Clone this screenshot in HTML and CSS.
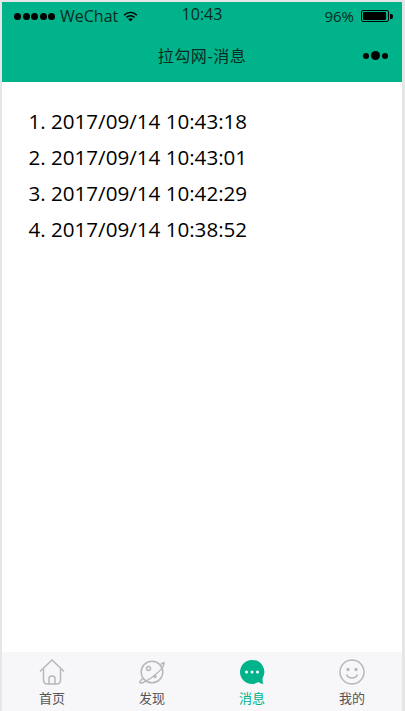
FILE: index.html
```html
<!DOCTYPE html>
<html lang="zh-CN">
<head>
    <meta charset="utf-8">
    <title>拉勾网-消息</title>
    <link rel="stylesheet" href="styles.css">
</head>
<body>
    <div class="phone">
        <header class="top">
            <div class="status">
                <div class="status-left">
                    <span class="signal"><i></i><i></i><i></i><i></i><i></i></span>
                    <span class="carrier">WeChat</span>
                    <svg class="wifi" width="15" height="11" viewBox="0 0 15 11">
                        <path d="M1 4.200C5 .6 10 .6 14 4.200" fill="none" stroke="#000" stroke-width="1.500"/>
                        <path d="M3.400 6.400C5.900 4.300 9.100 4.300 11.600 6.400" fill="none" stroke="#000" stroke-width="1.500"/>
                        <path d="M5.200 8.100C6.600 6.900 8.400 6.900 9.800 8.100L7.500 10.600Z" fill="#000"/>
                    </svg>
                </div>
                <div class="status-time">10:43</div>
                <div class="status-right">
                    <span class="percent">96%</span>
                    <span class="battery"><span class="battery-level"></span></span>
                    <span class="battery-tip"></span>
                </div>
            </div>
            <div class="nav">
                <div class="nav-title">拉勾网-消息</div>
                <div class="nav-menu"><i></i><i class="big"></i><i></i></div>
            </div>
        </header>

        <main class="content">
            <ol class="times">
                <li>2017/09/14 10:43:18</li>
                <li>2017/09/14 10:43:01</li>
                <li>2017/09/14 10:42:29</li>
                <li>2017/09/14 10:38:52</li>
            </ol>
        </main>

        <nav class="tabs">
            <div class="tab">
                <svg width="26" height="26" viewBox="0 0 26 26" fill="none" stroke="#b8b8b8" stroke-width="1.500">
                    <path d="M1 12.500L13 1L25 12.500"/>
                    <path d="M4.500 10V21C4.500 23.500 6 25 8.500 25H17.500C20 25 21.500 23.500 21.500 21V10"/>
                    <path d="M10 25V19.500C10 18 11.300 17 13 17C14.700 17 16 18 16 19.500V25"/>
                </svg>
                <span>首页</span>
            </div>
            <div class="tab">
                <svg width="26" height="26" viewBox="0 0 26 26" fill="none" stroke="#b8b8b8" stroke-width="1.500">
                    <circle cx="13" cy="13" r="10.800"/>
                    <circle cx="9.500" cy="9.500" r="2"/>
                    <circle cx="16" cy="17.500" r="1" fill="#b8b8b8"/>
                    <path d="M22 5.500C24 3.200 25.500 3 25 5C24.500 8 19 14 12 19C6 23 1 25.500 .8 23.500C.6 22.500 2 21 3.500 19.500"/>
                </svg>
                <span>发现</span>
            </div>
            <div class="tab tab-active">
                <svg width="26" height="26" viewBox="0 0 26 26">
                    <path d="M13 1A12 12 0 1 0 19.500 23.100C21 24.300 23 25 24.500 25C23.700 23.800 23.500 22 23.500 19.300A12 12 0 0 0 13 1Z" fill="#00b38a"/>
                    <circle cx="7.500" cy="13" r="1.500" fill="#fff"/>
                    <circle cx="13" cy="13" r="1.500" fill="#fff"/>
                    <circle cx="18.500" cy="13" r="1.500" fill="#fff"/>
                </svg>
                <span>消息</span>
            </div>
            <div class="tab">
                <svg width="26" height="26" viewBox="0 0 26 26" fill="none" stroke="#b8b8b8" stroke-width="1.500">
                    <circle cx="13" cy="13" r="12"/>
                    <circle cx="9" cy="10.500" r=".9" fill="#b8b8b8"/>
                    <circle cx="17" cy="10.500" r=".9" fill="#b8b8b8"/>
                    <path d="M7.500 15.500C9 20 17 20 18.500 15.500"/>
                </svg>
                <span>我的</span>
            </div>
        </nav>
    </div>
</body>
</html>
```

FILE: styles.css
```css
html, body {
    height: 100%;
}

body {
    margin: 0;
    padding: 2px 3px 0 2px;
    box-sizing: border-box;

    background-color: #e6e6e6;
    font-family: "Open Sans", "Noto Sans CJK SC", sans-serif;
    color: #000;
}

.phone {
    display: flex;
    flex-direction: column;
    height: 100%;

    background-color: #fff;
}

.top {
    height: 80px;

    background-color: #00b38a;
}

.status {
    display: flex;
    align-items: center;
    justify-content: space-between;
    height: 28px;
    padding: 0 9px 0 12px;
    position: relative;

    font-size: 15px;
    line-height: 26px;
    color: #0a2a22;
}

.status-left, .status-right {
    display: flex;
    align-items: center;
}

.signal {
    display: flex;
    gap: 1.500px;
    margin-right: 5px;
}

.signal i {
    width: 7px;
    height: 7px;

    background-color: #000;
    border-radius: 50%;
}

.carrier {
    font-size: 16px;
}

.wifi {
    margin-left: 5px;
}

.status-time {
    position: absolute;
    left: 0;
    right: 0;
    top: -1px;

    font-size: 16px;
    text-align: center;
}

.percent {
    margin-right: 7px;
}

.battery {
    width: 28px;
    height: 12px;
    padding: 1px;
    box-sizing: border-box;

    border: 1px solid #000;
    border-radius: 2px;
}

.battery-level {
    display: block;
    width: 23px;
    height: 8px;

    background-color: #000;
    border-radius: 1px;
}

.battery-tip {
    width: 3px;
    height: 5px;
    margin-left: 1px;

    background-color: #000;
    border-radius: 0 2px 2px 0;
}

.nav {
    display: flex;
    align-items: center;
    justify-content: center;
    height: 52px;
    position: relative;
}

.nav-title {
    margin-bottom: 2px;

    font-size: 16px;
    letter-spacing: .6px;
    color: #0a2a22;
}

.nav-menu {
    display: flex;
    align-items: center;
    gap: 2px;
    position: absolute;
    right: 14px;
    top: 21px;
}

.nav-menu i {
    width: 6px;
    height: 6px;

    background-color: #000;
    border-radius: 50%;
}

.nav-menu .big {
    width: 9px;
    height: 9px;
}

.content {
    flex: 1;
}

.times {
    margin: 0;
    padding: 21px 0 0 49px;

    font-size: 20.6px;
}

.times li {
    height: 36px;
    line-height: 36px;
}

.tabs {
    display: flex;
    height: 59px;

    background-color: #f7f7fa;
}

.tab {
    flex: 1;
    display: flex;
    flex-direction: column;
    align-items: center;
    padding-top: 7px;

    font-size: 13px;
    color: #555;
}

.tab span {
    margin-top: 5px;
    line-height: 16px;
}

.tab-active {
    color: #00b38a;
}
```
